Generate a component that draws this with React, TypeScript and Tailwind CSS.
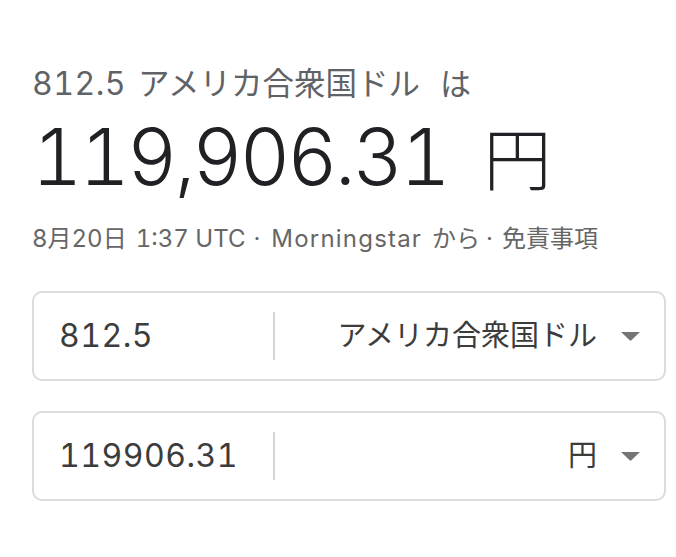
import React from "react";

function Caret() {
  return (
    <svg width="19" height="9" viewBox="0 0 19 9" className="shrink-0">
      <path d="M0 0 L19 0 L9.5 9 Z" fill="#757575" />
    </svg>
  );
}

function Row({ value, unit }: { value: string; unit: string }) {
  return (
    <div className="flex h-[90px] items-center rounded-[10px] border-2 border-[#dcdcdc] bg-white">
      <div className="w-[239px] pl-[25px] text-[32px] tabular-nums tracking-[0.5px] text-[#3c3c3c]">{value}</div>
      <div className="h-[48px] w-[2px] bg-[#d6d6d6]" />
      <div className="flex flex-1 items-center justify-end gap-[24px] pr-[24px]">
        <span className="text-[29px] text-[#3c3c3c]">{unit}</span>
        <Caret />
      </div>
    </div>
  );
}

export default function App() {
  return (
    <div
      className="h-[557px] w-[676px] bg-white pl-[32px] pr-[10px] pt-[62px] tabular-nums"
      style={{ fontFamily: "Inter, 'Noto Sans CJK JP', sans-serif" }}
    >
      <div className="h-[44px] whitespace-nowrap text-[32px] leading-[44px] text-[#5f6368]">
        <span className="tracking-[0.5px]">812.5</span>
        <span className="ml-[12px] text-[31.5px]">アメリカ合衆国ドル</span>
        <span className="ml-[20px] text-[31px]">は</span>
      </div>
      <div className="mt-[6px] h-[90px] whitespace-nowrap text-[78px] font-light leading-[90px] text-[#202124]">
        <span className="tracking-[-3px]">119,906.31</span>
        <span className="ml-[36px] text-[68px]">円</span>
      </div>
      <div className="mt-[19px] h-[36px] whitespace-nowrap text-[24px] leading-[36px] text-[#666]">
        <span>8月20日</span>
        <span className="ml-[9px]">1:37 UTC</span>
        <span className="ml-[8px]">·</span>
        <span className="ml-[11px] tracking-[1.2px]">Morningstar</span>
        <span className="ml-[10px]">から</span>
        <span className="ml-[6px]">·</span>
        <span className="ml-[9px]">免責事項</span>
      </div>
      <div className="mt-[34px] flex flex-col gap-[30px]">
        <Row value="812.5" unit="アメリカ合衆国ドル" />
        <Row value="119906.31" unit="円" />
      </div>
    </div>
  );
}
